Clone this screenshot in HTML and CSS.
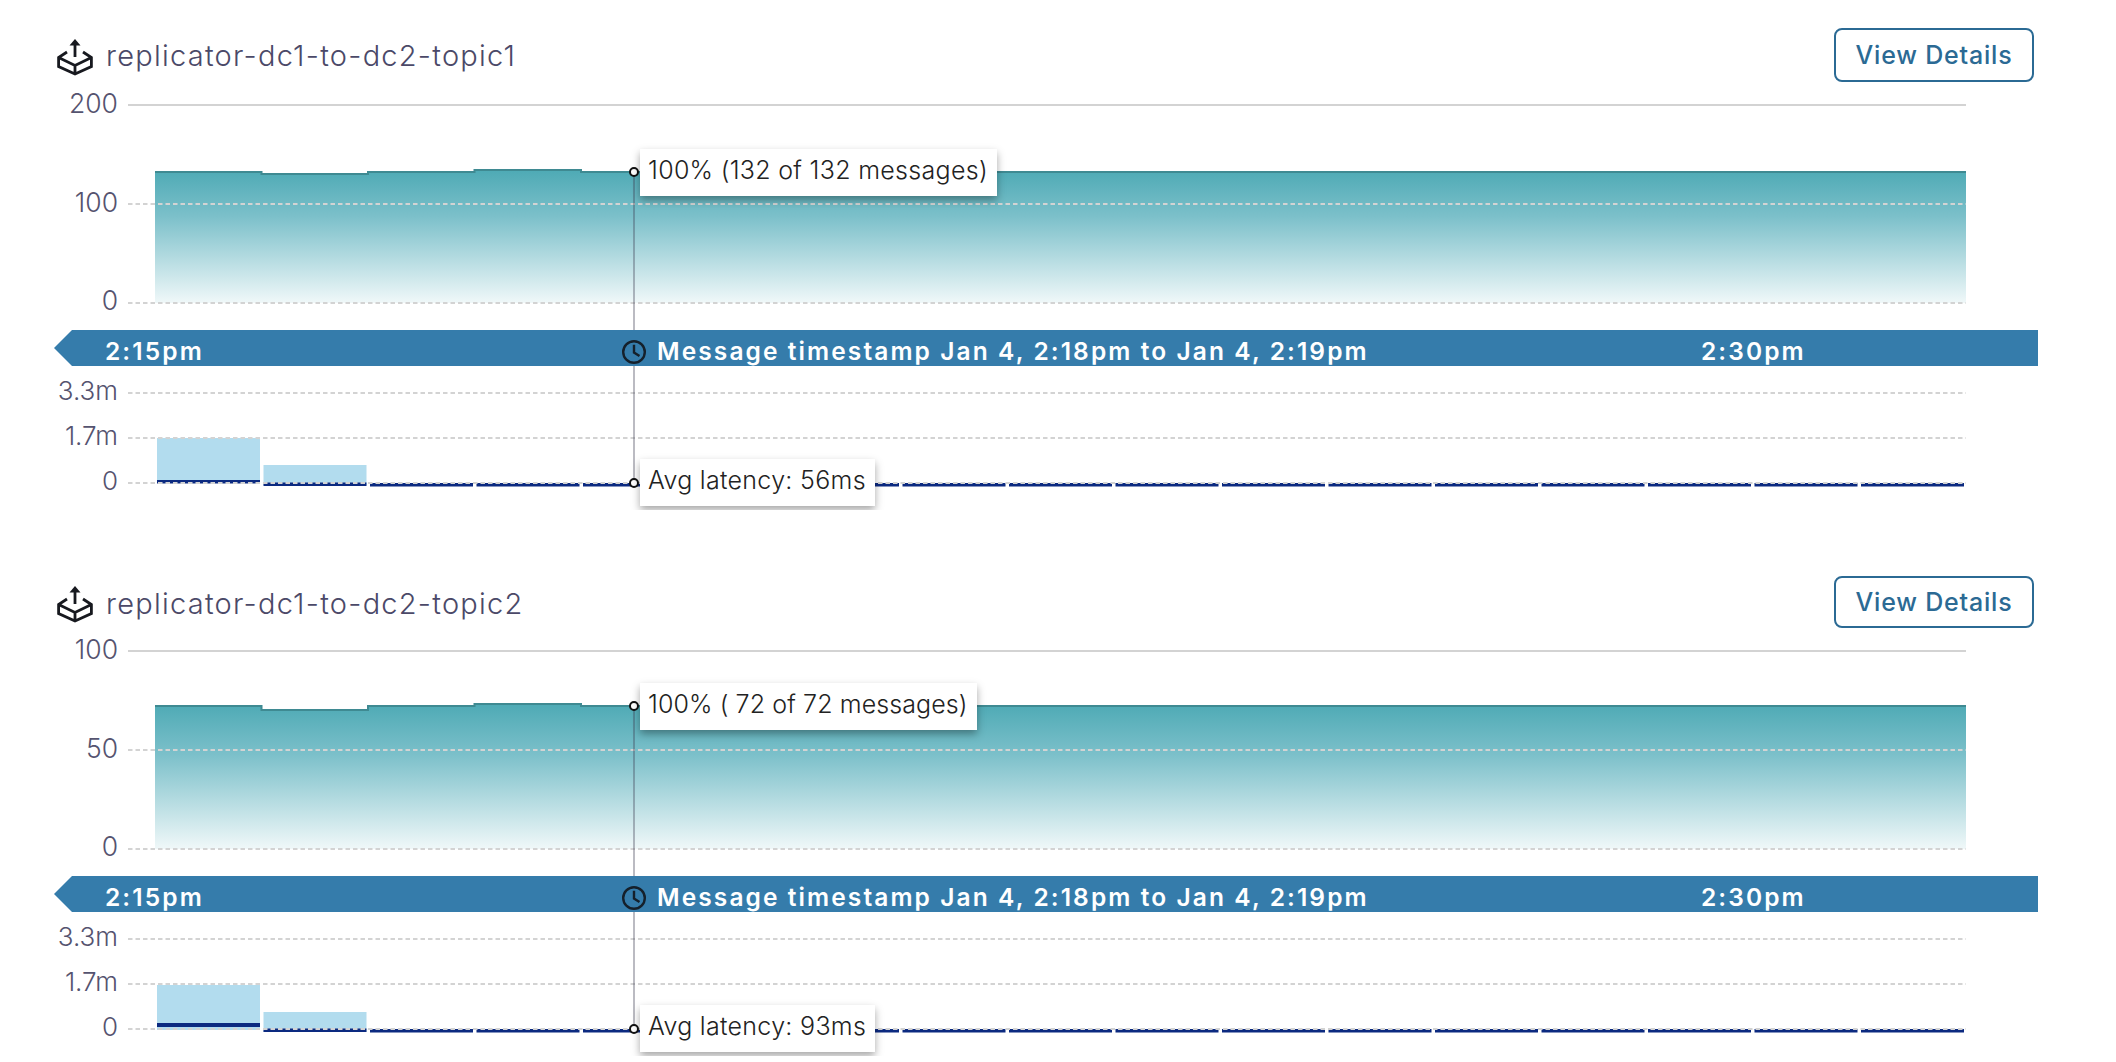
FILE: index.html
```html
<!DOCTYPE html>
<html lang="en">
<head>
<meta charset="utf-8">
<title>Replicator topics</title>
<link rel="stylesheet" href="styles.css">
</head>
<body>
<svg class="defs" width="0" height="0" aria-hidden="true">
  <defs>
    <linearGradient id="fade" x1="0" y1="0" x2="0" y2="1">
      <stop offset="0" stop-color="#4eaab5"/>
      <stop offset="0.35" stop-color="#7cc0ca"/>
      <stop offset="1" stop-color="#f0f8f9"/>
    </linearGradient>
  </defs>
</svg>

<section class="topic">
  <header class="topic-head">
    <div class="topic-name">
      <svg class="box-icon" viewBox="0 0 36 36"><path class="box-line" d="M10 13 1.600 18.500v9L18 35l16.400-7.500v-9L26 13M1.600 18.500 18 26.500l16.400-8M18 26.500V35M18 5V18"/><path class="box-fill" d="M18 0l5.500 6.500H12.500z"/></svg>
      <h2 class="topic-title">replicator-dc1-to-dc2-topic1</h2>
    </div>
    <button class="details-btn">View Details</button>
  </header>

  <div class="chart chart-main">
    <div class="axis axis-main"><span>200</span><span>100</span><span>0</span></div>
    <div class="plot">
      <svg class="plot-svg" width="1838" height="248" viewBox="0 0 1838 248">
        <path class="area" d="M27 221V90H133.500V92H240V90H346.500V88H453V90H1838V221Z"/>
        <path class="area-top" d="M27 90H133.500V92H240V90H346.500V88H453V90H1838"/>
        <line class="grid-solid" x1="0" y1="23" x2="1838" y2="23"/>
        <line class="grid-dash" x1="0" y1="122" x2="1838" y2="122"/>
        <line class="grid-dash" x1="0" y1="221" x2="1838" y2="221"/>
        <line class="cursor" x1="506" y1="90" x2="506" y2="248"/>
        <circle class="dot" cx="506" cy="90" r="4"/>
      </svg>
      <div class="tip" style="top:67px">100% (132 of 132 messages)</div>
    </div>
  </div>

  <div class="time-bar">
    <span class="time-start">2:15pm</span>
    <svg class="clock" viewBox="0 0 24 24"><circle cx="12" cy="12" r="10.800"/><path d="M12 4.800V12.500L17.500 16"/></svg>
    <span class="time-range">Message timestamp Jan 4, 2:18pm to Jan 4, 2:19pm</span>
    <span>2:30pm</span>
  </div>

  <div class="chart chart-lat">
    <div class="axis axis-lat"><span>3.3m</span><span>1.7m</span><span>0</span></div>
    <div class="plot plot-clip">
      <svg class="plot-svg" width="1838" height="144" viewBox="0 0 1838 144">
        <rect class="lat-bar" x="29" y="72" width="103" height="45"/>
        <rect class="lat-bar" x="135.500" y="99" width="103" height="20"/>
        <rect class="lat-avg" x="29" y="114" width="103" height="3.500"/>
        <rect class="lat-avg" x="135.500" y="116.500" width="103" height="3.500"/>
        <line class="lat-rest" x1="242" y1="118.800" x2="1836" y2="118.800"/>
        <line class="grid-dash" x1="0" y1="27" x2="1838" y2="27"/>
        <line class="grid-dash" x1="0" y1="72" x2="1838" y2="72"/>
        <line class="grid-dash" x1="0" y1="117" x2="1838" y2="117"/>
        <line class="cursor" x1="506" y1="0" x2="506" y2="117"/>
        <circle class="dot" cx="506" cy="117" r="4"/>
      </svg>
      <div class="tip" style="top:93px">Avg latency: 56ms</div>
    </div>
  </div>
</section>

<section class="topic">
  <header class="topic-head topic-head-low">
    <div class="topic-name">
      <svg class="box-icon" viewBox="0 0 36 36"><path class="box-line" d="M10 13 1.600 18.500v9L18 35l16.400-7.500v-9L26 13M1.600 18.500 18 26.500l16.400-8M18 26.500V35M18 5V18"/><path class="box-fill" d="M18 0l5.500 6.500H12.500z"/></svg>
      <h2 class="topic-title">replicator-dc1-to-dc2-topic2</h2>
    </div>
    <button class="details-btn">View Details</button>
  </header>

  <div class="chart chart-main">
    <div class="axis axis-main"><span>100</span><span>50</span><span>0</span></div>
    <div class="plot">
      <svg class="plot-svg" width="1838" height="248" viewBox="0 0 1838 248">
        <path class="area" d="M27 221V78H133.500V82H240V78H346.500V76H453V78H1838V221Z"/>
        <path class="area-top" d="M27 78H133.500V82H240V78H346.500V76H453V78H1838"/>
        <line class="grid-solid" x1="0" y1="23" x2="1838" y2="23"/>
        <line class="grid-dash" x1="0" y1="122" x2="1838" y2="122"/>
        <line class="grid-dash" x1="0" y1="221" x2="1838" y2="221"/>
        <line class="cursor" x1="506" y1="78" x2="506" y2="248"/>
        <circle class="dot" cx="506" cy="78" r="4"/>
      </svg>
      <div class="tip tip-tight" style="top:55px">100% ( 72 of 72 messages)</div>
    </div>
  </div>

  <div class="time-bar">
    <span class="time-start">2:15pm</span>
    <svg class="clock" viewBox="0 0 24 24"><circle cx="12" cy="12" r="10.800"/><path d="M12 4.800V12.500L17.500 16"/></svg>
    <span class="time-range">Message timestamp Jan 4, 2:18pm to Jan 4, 2:19pm</span>
    <span>2:30pm</span>
  </div>

  <div class="chart chart-lat">
    <div class="axis axis-lat"><span>3.3m</span><span>1.7m</span><span>0</span></div>
    <div class="plot plot-clip">
      <svg class="plot-svg" width="1838" height="144" viewBox="0 0 1838 144">
        <rect class="lat-bar" x="29" y="73" width="103" height="45"/>
        <rect class="lat-bar" x="135.500" y="100" width="103" height="20"/>
        <rect class="lat-avg" x="29" y="111" width="103" height="4"/>
        <rect class="lat-avg" x="135.500" y="116.500" width="103" height="3.500"/>
        <line class="lat-rest" x1="242" y1="118.800" x2="1836" y2="118.800"/>
        <line class="grid-dash" x1="0" y1="27" x2="1838" y2="27"/>
        <line class="grid-dash" x1="0" y1="72" x2="1838" y2="72"/>
        <line class="grid-dash" x1="0" y1="117" x2="1838" y2="117"/>
        <line class="cursor" x1="506" y1="0" x2="506" y2="117"/>
        <circle class="dot" cx="506" cy="117" r="4"/>
      </svg>
      <div class="tip" style="top:93px">Avg latency: 93ms</div>
    </div>
  </div>
</section>
</body>
</html>
```
FILE: styles.css
```css
* { box-sizing: border-box; }
html, body { margin: 0; padding: 0; background: #fff; }
body { font-family: Inter, "Liberation Sans", sans-serif; overflow: hidden; }
.defs { position: absolute; }

.topic { height: 546px; padding: 28px 78px 0 54px; }

.topic-head { height: 54px; padding: 0 4px 0 3px; display: flex; align-items: center; justify-content: space-between; }
.topic-name { display: flex; align-items: center; gap: 13px; }
.box-icon { width: 36px; height: 36px; display: block; overflow: visible; margin-top: 4px; }
.box-line { fill: none; stroke: #17191f; stroke-width: 2.8; }
.box-fill { fill: #17191f; }
.topic-title { margin: 0; font-size: 29px; font-weight: 300; color: #4b4968; letter-spacing: 1.25px; }
.details-btn { width: 200px; height: 54px; padding: 0; background: #fff; border: 2px solid #2b6a94; border-radius: 8px; color: #2b6a94; font: 500 25px Inter, sans-serif; letter-spacing: 0.8px; }

.topic-head-low { padding-top: 2px; }
.topic-head-low .topic-title { padding-top: 2px; }
.topic-head-low .details-btn { height: 52px; }

.chart { display: flex; gap: 10px; }
.chart-main { height: 248px; }
.chart-lat { height: 144px; }

.axis { width: 64px; display: flex; flex-direction: column; justify-content: space-between; align-items: flex-end; font-size: 26.500px; font-weight: 300; color: #55536f; }
.axis span { display: block; line-height: 30px; }
.axis-main { padding: 6px 0 15px; }
.axis-lat { padding: 10px 0 14px; font-size: 26px; }

.plot { position: relative; width: 1838px; }
.plot-clip { overflow: hidden; }
.plot-svg { display: block; }

.area { fill: url(#fade); }
.area-top { fill: none; stroke: #3f8a92; stroke-width: 2; }
.grid-solid { stroke: #d3d3d3; stroke-width: 2; }
.grid-dash { stroke: #d3d3d3; stroke-width: 2; stroke-dasharray: 4.5 3; }
.cursor { stroke: rgba(60, 60, 80, 0.35); stroke-width: 2; }
.dot { fill: #fff; stroke: #111; stroke-width: 2; }
.lat-bar { fill: #b2dcee; }
.lat-avg { fill: #0c2a80; }
.lat-rest { stroke: #0c2a80; stroke-width: 3.5; stroke-dasharray: 103 3.5; }

.tip { position: absolute; left: 512px; height: 47px; padding: 0 9px 6px 8px; display: flex; align-items: center; background: #fff; box-shadow: 0 4px 8px rgba(0, 0, 0, 0.35); font-size: 25px; font-weight: 300; letter-spacing: 0.3px; color: #222; white-space: nowrap; }
.tip-tight { letter-spacing: 0.1px; }

.time-bar { height: 36px; padding: 6px 0 0 51px; display: flex; align-items: center; background: #357cab; clip-path: polygon(18px 0, 100% 0, 100% 100%, 18px 100%, 0 50%); color: #fff; font-size: 24.500px; font-weight: 600; letter-spacing: 2.1px; white-space: nowrap; }
.time-start { width: 517px; }
.clock { width: 24px; height: 24px; flex: none; margin: 2px 11px 0 0; }
.clock circle, .clock path { fill: none; stroke: #15202b; stroke-width: 2.4; }
.time-range { width: 1044px; }
```
